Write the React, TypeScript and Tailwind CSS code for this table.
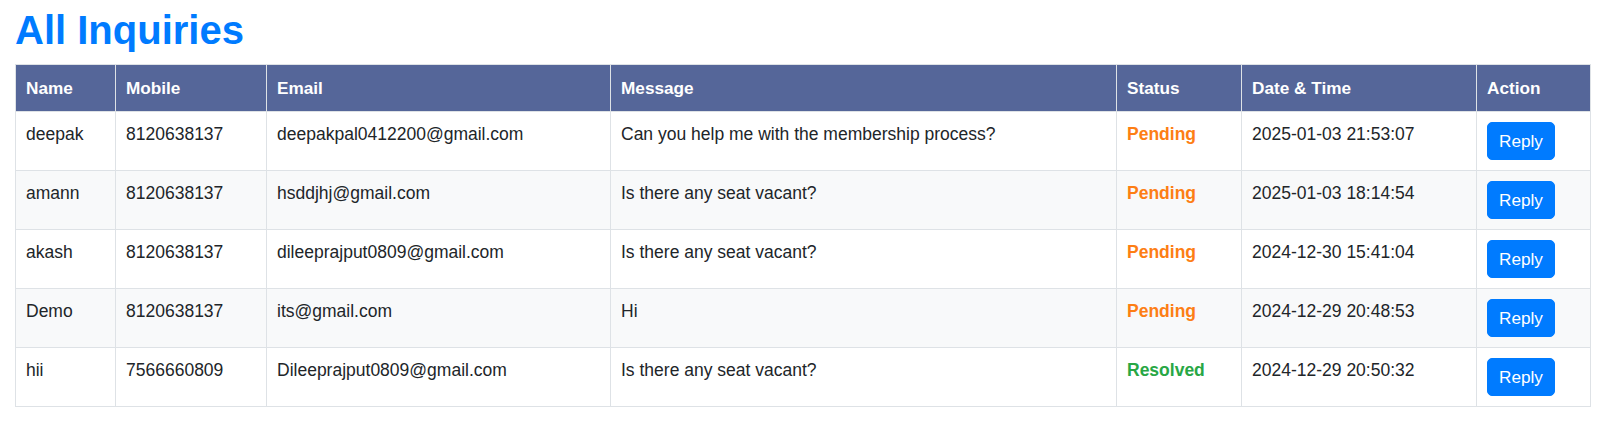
import React from "react";

type Row = {
  name: string;
  mobile: string;
  email: string;
  message: string;
  status: "Pending" | "Resolved";
  date: string;
};

const rows: Row[] = [
  { name: "deepak", mobile: "8120638137", email: "deepakpal0412200@gmail.com", message: "Can you help me with the membership process?", status: "Pending", date: "2025-01-03 21:53:07" },
  { name: "amann", mobile: "8120638137", email: "hsddjhj@gmail.com", message: "Is there any seat vacant?", status: "Pending", date: "2025-01-03 18:14:54" },
  { name: "akash", mobile: "8120638137", email: "dileeprajput0809@gmail.com", message: "Is there any seat vacant?", status: "Pending", date: "2024-12-30 15:41:04" },
  { name: "Demo", mobile: "8120638137", email: "its@gmail.com", message: "Hi", status: "Pending", date: "2024-12-29 20:48:53" },
  { name: "hii", mobile: "7566660809", email: "Dileeprajput0809@gmail.com", message: "Is there any seat vacant?", status: "Resolved", date: "2024-12-29 20:50:32" },
];

const headers = ["Name", "Mobile", "Email", "Message", "Status", "Date & Time", "Action"];

export default function App() {
  return (
    <div
      className="min-h-[424px] bg-white pl-[15px] pt-[6px]"
      style={{ fontFamily: '"Liberation Sans", Arial, sans-serif' }}
    >
      <h1 className="text-[40px] font-bold leading-[48px] text-[#007bff] m-0">All Inquiries</h1>
      <table className="mt-[10px] w-[1575px] table-fixed border-collapse text-[17.5px] leading-[24px] text-[#212529]">
        <colgroup>
          <col className="w-[100px]" />
          <col className="w-[151px]" />
          <col className="w-[344px]" />
          <col className="w-[506px]" />
          <col className="w-[125px]" />
          <col className="w-[235px]" />
          <col className="w-[114px]" />
        </colgroup>
        <thead>
          <tr>
            {headers.map((h) => (
              <th
                key={h}
                className="border border-[#dee2e6] bg-[#556699] px-[10px] py-[11px] text-left text-[17.2px] font-bold text-white"
              >
                {h}
              </th>
            ))}
          </tr>
        </thead>
        <tbody>
          {rows.map((r, i) => (
            <tr key={i} className={i % 2 === 1 ? "bg-[#f8f9fa]" : "bg-white"}>
              <td className="border border-[#dee2e6] p-[10px] align-top">{r.name}</td>
              <td className="border border-[#dee2e6] p-[10px] align-top">{r.mobile}</td>
              <td className="border border-[#dee2e6] p-[10px] align-top">{r.email}</td>
              <td className="border border-[#dee2e6] p-[10px] align-top">{r.message}</td>
              <td
                className={
                  "border border-[#dee2e6] p-[10px] align-top font-bold " +
                  (r.status === "Pending" ? "text-[#fd7e14]" : "text-[#28a745]")
                }
              >
                {r.status}
              </td>
              <td className="border border-[#dee2e6] p-[10px] align-top">{r.date}</td>
              <td className="border border-[#dee2e6] p-[10px] align-top">
                <button className="block h-[38px] rounded-[5px] border border-[#007bff] bg-[#007bff] px-[11px] text-[17.2px] leading-[24px] text-white">
                  Reply
                </button>
              </td>
            </tr>
          ))}
        </tbody>
      </table>
    </div>
  );
}
